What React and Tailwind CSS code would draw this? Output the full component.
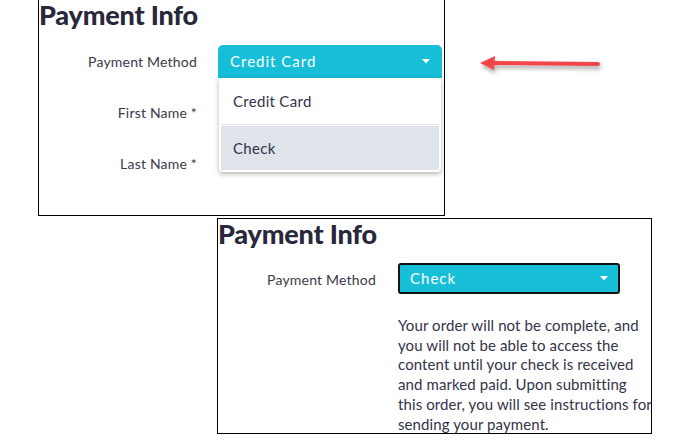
import React from 'react';

const font = { fontFamily: '"Lato", "Noto Sans", sans-serif' };

function Caret() {
  return (
    <svg width="8" height="5" viewBox="0 0 8 5" className="shrink-0">
      <path d="M0 0 L8 0 L4 4.5 Z" fill="#ffffff" />
    </svg>
  );
}

function Heading() {
  return (
    <h2 className="text-[27px] leading-[30px] font-black text-[#28283a] tracking-[-0.2px]">
      Payment Info
    </h2>
  );
}

export default function App() {
  return (
    <div className="relative w-[691px] h-[448px] bg-white overflow-hidden" style={font}>
      {/* Top capture: open dropdown */}
      <div className="ml-[38px] w-[407px] h-[216px] border border-t-0 border-black">
        <Heading />
        <div className="mt-[15px] flex items-center">
          <div className="w-[158px] shrink-0 text-right text-[14px] tracking-[0.2px] text-[#3a3a48]">Payment Method</div>
          <div className="relative ml-[21px] w-[224px] shrink-0">
            <div className="h-[33px] rounded-t-[5px] bg-[#17bed8] flex items-center justify-between px-[12px]">
              <span className="text-white text-[15px] tracking-[1px]">Credit Card</span>
              <Caret />
            </div>
            {/* Dropdown menu */}
            <div className="absolute left-[1px] right-[1px] top-[33px] bg-white rounded-b-[4px] shadow-[0_2px_5px_rgba(0,0,0,0.3)] px-[2px] pb-[2px] z-10">
              <div className="h-[47px] flex items-center px-[12px] text-[15px] tracking-[0.3px] text-[#33334a] border-b border-dotted border-[#d4d8dc]">
                Credit Card
              </div>
              <div className="mt-[1px] h-[44px] flex items-center px-[12px] text-[15px] tracking-[0.3px] text-[#33334a] bg-[#dee4ea]">
                Check
              </div>
            </div>
          </div>
        </div>
        <div className="mt-[24px] w-[158px] text-right text-[14px] tracking-[0.2px] text-[#3a3a48]">First Name *</div>
        <div className="mt-[30px] w-[158px] text-right text-[14px] tracking-[0.2px] text-[#3a3a48]">Last Name *</div>
      </div>

      {/* Bottom capture: Check selected */}
      <div className="mt-[2px] ml-[217px] w-[435px] h-[216px] border border-black">
        <Heading />
        <div className="mt-[14px] flex items-start">
          <div className="w-[158px] shrink-0 text-right text-[14px] tracking-[0.2px] text-[#3a3a48] pt-[6px]">Payment Method</div>
          <div className="ml-[22px] flex flex-col shrink-0">
            <div className="w-[222px] h-[31px] rounded-[3px] border-2 border-[#111] bg-[#17bed8] flex items-center justify-between px-[10px]">
              <span className="text-white text-[15px] tracking-[1px]">Check</span>
              <Caret />
            </div>
            <p className="mt-[22px] w-[262px] whitespace-nowrap text-[15px] leading-[19.7px] tracking-[0.1px] text-[#33334a]">
              Your order will not be complete, and<br />
              you will not be able to access the<br />
              content until your check is received<br />
              and marked paid. Upon submitting<br />
              this order, you will see instructions for<br />
              sending your payment.
            </p>
          </div>
        </div>
      </div>

      {/* Red annotation arrow */}
      <svg className="absolute left-[474px] top-[50px]" width="135" height="30" viewBox="0 0 135 30">
        <defs>
          <filter id="sh" x="-20%" y="-50%" width="140%" height="200%">
            <feDropShadow dx="1" dy="3" stdDeviation="2" floodColor="#000" floodOpacity="0.35" />
          </filter>
        </defs>
        <g filter="url(#sh)">
          <line x1="18" y1="13" x2="124" y2="14" stroke="#f2444a" strokeWidth="4" strokeLinecap="round" />
          <path d="M6 13 L21 6 L20 20 Z" fill="#f2444a" />
        </g>
      </svg>
    </div>
  );
}
